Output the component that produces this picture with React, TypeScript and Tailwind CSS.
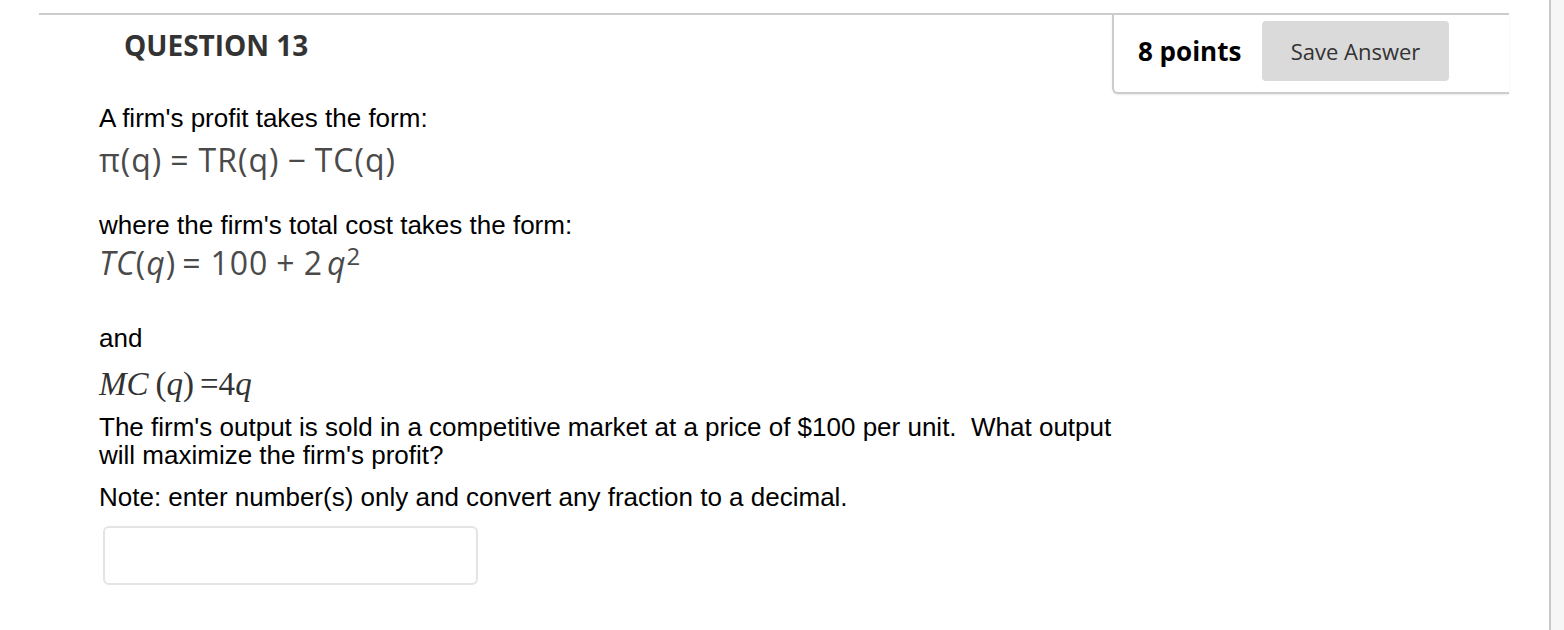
import React from "react";

export default function App() {
  const body = "font-['Liberation_Sans',Arial,sans-serif] text-[26px] leading-[28px] text-black";
  const math = "font-['Open_Sans',sans-serif] text-[32px] leading-[40px] h-[40px] text-[#4a4a4a] whitespace-nowrap tracking-[1px]";
  return (
    <div className="flex h-[630px] w-[1564px] bg-white overflow-hidden">
      <div className="w-[1549px] shrink-0 pl-[39px] pr-[40px] pt-[13px] bg-white">
        <div className="flex justify-between border-t-2 border-[#cccccc]">
          <h2 className="pl-[85px] pt-[12px] font-['Open_Sans',sans-serif] font-bold text-[28px] leading-[36px] text-[#333333]">
            QUESTION 13
          </h2>
          <div className="w-[397px] h-[79px] border-l-2 border-b-2 border-[#cccccc] rounded-bl-[6px] shadow-[0_1px_2px_rgba(0,0,0,0.08)] flex items-start pt-[6px] pl-[24px] bg-white">
            <div className="w-[124px] h-[60px] flex items-center font-['Open_Sans',sans-serif] font-bold text-[26px] text-black">
              8 points
            </div>
            <button className="w-[187px] h-[60px] rounded-[4px] bg-[#dadada] font-['Open_Sans',sans-serif] text-[22px] text-[#333333]">
              Save Answer
            </button>
          </div>
        </div>

        <div className="pl-[60px]">
          <p className={`${body} mt-[10px]`}>A firm's profit takes the form:</p>
          <div className={`${math} mt-[8px] flex`}>
            <span>π(q)</span>
            <span className="ml-[8px]">=</span>
            <span className="ml-[9px]">TR(q)</span>
            <span className="ml-[8px]">−</span>
            <span className="ml-[8px]">TC(q)</span>
          </div>
          <p className={`${body} mt-[31px]`}>where the firm's total cost takes the form:</p>
          <div className={`${math} mt-[4px] flex`}>
            <span className="italic">TC</span>
            <span>(</span>
            <span className="italic">q</span>
            <span>)</span>
            <span className="ml-[6px]">=</span>
            <span className="ml-[9px]">100</span>
            <span className="ml-[8px]">+</span>
            <span className="ml-[8px]">2</span>
            <span className="italic ml-[4px]">q</span>
            <span className="text-[24px] leading-[24px] mt-[1px]">2</span>
          </div>
          <p className={`${body} mt-[41px]`}>and</p>
          <div className="mt-[13px] h-[38px] flex font-['Liberation_Serif','Times_New_Roman',serif] text-[33px] leading-[38px] text-[#333333] whitespace-nowrap">
            <span className="italic">MC</span>
            <span className="ml-[7px]">(</span>
            <span className="italic">q</span>
            <span>)</span>
            <span className="ml-[6px]">=4</span>
            <span className="italic">q</span>
          </div>
          <p className={`${body} mt-[10px] whitespace-nowrap`}>
            The firm's output is sold in a competitive market at a price of $100 per unit.&nbsp; What output
            <br />
            will maximize the firm's profit?
          </p>
          <p className={`${body} mt-[14px]`}>Note: enter number(s) only and convert any fraction to a decimal.</p>
          <input
            type="text"
            className="block mt-[15px] ml-[4px] w-[375px] h-[59px] border-2 border-[#e4e4e4] rounded-[6px] bg-white outline-none"
          />
        </div>
      </div>
      <div className="w-[2px] shrink-0 bg-[#c8c8c8]" />
      <div className="flex-1 bg-[#f6f6f6]" />
    </div>
  );
}
